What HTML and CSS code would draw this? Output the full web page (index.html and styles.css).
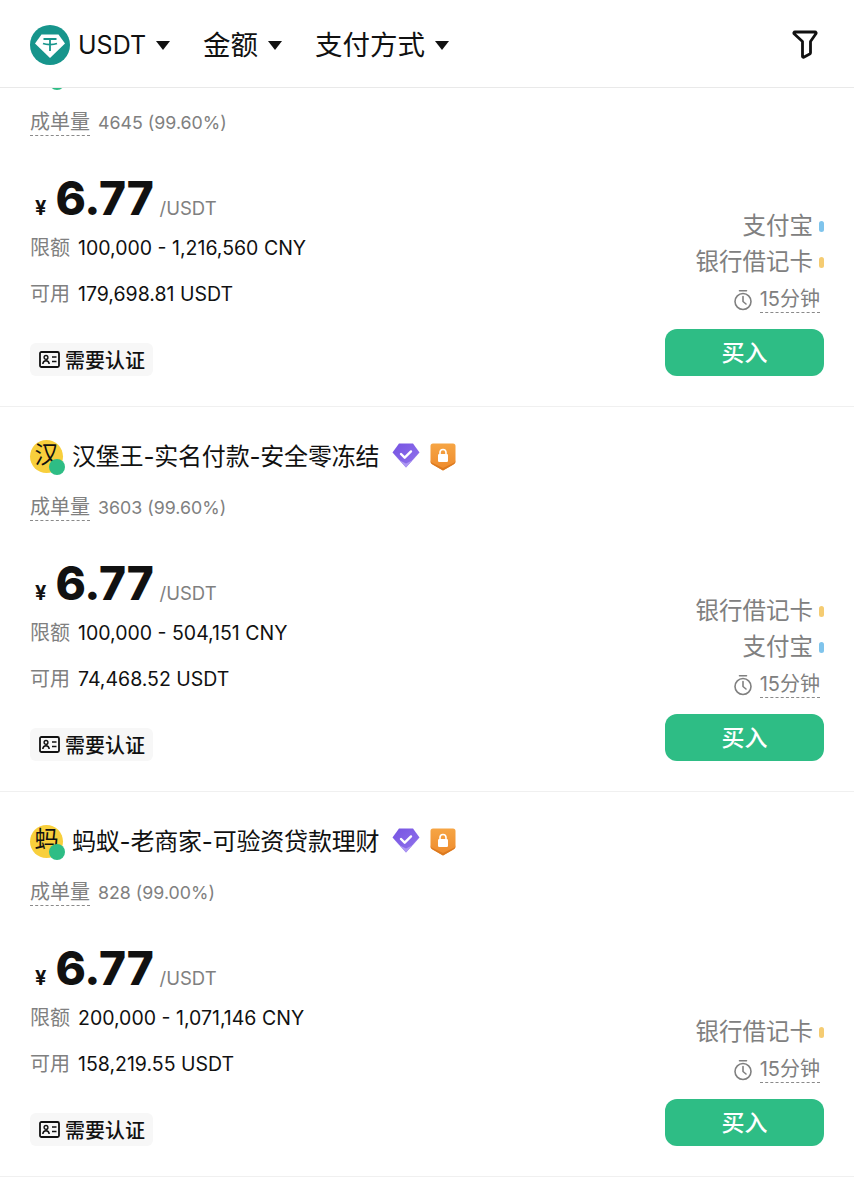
FILE: index.html
```html
<!DOCTYPE html>
<html lang="zh-CN">
  <head>
    <meta charset="UTF-8" />
    <title>USDT</title>
    <link rel="stylesheet" href="styles.css">
  </head>
  <body>
    <svg class="defs" width="0" height="0">
      <defs>
        <linearGradient id="gem-top" x1="0" y1="0" x2="1" y2="1">
          <stop offset="0" stop-color="#7653e2" />
          <stop offset="1" stop-color="#9275ec" />
        </linearGradient>
        <linearGradient id="shield-fill" x1="0" y1="0" x2="0" y2="1">
          <stop offset="0" stop-color="#f6a544" />
          <stop offset="1" stop-color="#ee8a2c" />
        </linearGradient>
        <symbol id="clock" viewBox="0 0 20 22">
          <circle cx="10" cy="12.5" r="8" fill="none" stroke="#808080" stroke-width="1.6" />
          <path d="M6.5 1.8h7M10 7.500v5l3 2.500" fill="none" stroke="#808080" stroke-width="1.6" stroke-linecap="round" stroke-linejoin="round" />
        </symbol>
        <symbol id="idcard" viewBox="0 0 21 17">
          <rect x="1" y="1" width="19" height="15" rx="1.5" fill="none" stroke="#111" stroke-width="1.8" />
          <circle cx="7" cy="6.4" r="1.9" fill="none" stroke="#111" stroke-width="1.4" />
          <path d="M3.8 13c.2-2.200 1.500-3.200 3.200-3.200s3 1 3.200 3.200M13 6h4.500M13 10.500h4.500" fill="none" stroke="#111" stroke-width="1.5" />
        </symbol>
        <symbol id="gem" viewBox="0 0 28 25">
          <path d="M7 .5h14L27.500 9.500 14 24.500.5 9.500z" fill="url(#gem-top)" />
          <path d="M.5 9.500L14 24.500 27.500 9.500l-6.500 7.500L14 20.500 7 17z" fill="#ad97f2" />
          <path d="M9 11l3.700 3.700 6.300-6.300" fill="none" stroke="#fff" stroke-width="2.400" stroke-linecap="round" stroke-linejoin="round" />
        </symbol>
        <symbol id="shield" viewBox="0 0 26 28">
          <path d="M3 .5h20a2.500 2.500 0 0 1 2.500 2.500v15c0 1.800-.8 2.800-2.500 3.700L13 27.500 3 21.700C1.300 20.800.5 19.800.5 18V3A2.500 2.500 0 0 1 3 .5z" fill="url(#shield-fill)" />
          <path d="M.5 17v1c0 1.800.8 2.800 2.500 3.700l10 5.800 10-5.800c1.700-.9 2.500-1.900 2.500-3.700v-1c0 1.800-.8 2.400-2.500 3.300L13 25 3 20.300C1.300 19.400.5 18.800.5 17z" fill="#dc7a20" />
          <rect x="8" y="11" width="10" height="8" rx="1.200" fill="#fff" />
          <path d="M10 11.500V9.500a3 3 0 0 1 6 0v2" fill="none" stroke="#fff" stroke-width="1.600" />
        </symbol>
      </defs>
    </svg>

    <header class="topbar">
      <div class="filters">
        <div class="filter">
          <svg class="coin" viewBox="0 0 40 40">
            <circle cx="20" cy="20" r="20" fill="#17958c" />
            <path d="M11.500 9.500h17L35 18.500 20 33 5 18.500z" fill="#fff" />
            <path d="M13.500 14h13M20 14v12M13 18.500c3.500 1.400 10.500 1.400 14 0" fill="none" stroke="#17958c" stroke-width="1.800" />
          </svg>
          <span class="coin-name">USDT</span><i class="caret"></i>
        </div>
        <div class="filter"><span class="filter-name">金额</span><i class="caret"></i></div>
        <div class="filter"><span class="filter-name">支付方式</span><i class="caret"></i></div>
      </div>
      <svg class="funnel" viewBox="0 0 26 29">
        <path d="M3 2h20c1 0 1.500 1 .9 1.800L18.500 11.500v11.200c0 .6-.3 1-.8 1.300l-6 3.200c-.6.3-1.200-.1-1.200-.8V11.500L2.100 3.800C1.500 3 2 2 3 2z" fill="none" stroke="#111" stroke-width="2.800" stroke-linejoin="round" />
      </svg>
    </header>

    <main class="list">
      <section class="card">
        <div class="merchant">
          <div class="avatar"><i class="online"></i></div>
        </div>
        <p class="orders"><span class="dotted">成单量</span>4645 (99.60%)</p>
        <div class="body">
          <div class="info">
            <div class="price"><em>¥</em><strong>6.77</strong><small>/USDT</small></div>
            <p class="line"><label>限额</label>100,000 - 1,216,560 CNY</p>
            <p class="line"><label>可用</label>179,698.81 USDT</p>
            <div class="tag"><svg><use href="#idcard" /></svg>需要认证</div>
          </div>
          <div class="side">
            <p class="pay">支付宝<i class="blue"></i></p>
            <p class="pay">银行借记卡<i class="yellow"></i></p>
            <p class="time"><svg><use href="#clock" /></svg><span class="dotted">15分钟</span></p>
            <button class="buy">买入</button>
          </div>
        </div>
      </section>

      <section class="card">
        <div class="merchant">
          <div class="avatar">汉<i class="online"></i></div>
          <h2>汉堡王-实名付款-安全零冻结</h2>
          <svg class="gem"><use href="#gem" /></svg>
          <svg class="shield"><use href="#shield" /></svg>
        </div>
        <p class="orders"><span class="dotted">成单量</span>3603 (99.60%)</p>
        <div class="body">
          <div class="info">
            <div class="price"><em>¥</em><strong>6.77</strong><small>/USDT</small></div>
            <p class="line"><label>限额</label>100,000 - 504,151 CNY</p>
            <p class="line"><label>可用</label>74,468.52 USDT</p>
            <div class="tag"><svg><use href="#idcard" /></svg>需要认证</div>
          </div>
          <div class="side">
            <p class="pay">银行借记卡<i class="yellow"></i></p>
            <p class="pay">支付宝<i class="blue"></i></p>
            <p class="time"><svg><use href="#clock" /></svg><span class="dotted">15分钟</span></p>
            <button class="buy">买入</button>
          </div>
        </div>
      </section>

      <section class="card">
        <div class="merchant">
          <div class="avatar">蚂<i class="online"></i></div>
          <h2>蚂蚁-老商家-可验资贷款理财</h2>
          <svg class="gem"><use href="#gem" /></svg>
          <svg class="shield"><use href="#shield" /></svg>
        </div>
        <p class="orders"><span class="dotted">成单量</span>828 (99.00%)</p>
        <div class="body">
          <div class="info">
            <div class="price"><em>¥</em><strong>6.77</strong><small>/USDT</small></div>
            <p class="line"><label>限额</label>200,000 - 1,071,146 CNY</p>
            <p class="line"><label>可用</label>158,219.55 USDT</p>
            <div class="tag"><svg><use href="#idcard" /></svg>需要认证</div>
          </div>
          <div class="side">
            <p class="pay">银行借记卡<i class="yellow"></i></p>
            <p class="time"><svg><use href="#clock" /></svg><span class="dotted">15分钟</span></p>
            <button class="buy">买入</button>
          </div>
        </div>
      </section>
    </main>
  </body>
</html>
```

FILE: styles.css
```css
* {
  box-sizing: border-box;
}

html,
body {
  height: 1200px;
  overflow: hidden;
}

body {
  margin: 0;
  background-color: #fff;
  color: #111;
  font-family: Inter, "Noto Sans CJK SC", "Noto Sans", sans-serif;
}

p,
h2 {
  margin: 0;
  font-weight: 400;
}

.defs {
  position: absolute;
}

.topbar {
  position: relative;
  z-index: 2;
  display: flex;
  align-items: center;
  justify-content: space-between;
  height: 88px;
  padding: 2px 36px 0 30px;
  background-color: #fff;
  border-bottom: 1px solid #e9e9e9;
}

.filters {
  display: flex;
  align-items: center;
  gap: 33px;
}

.filter {
  display: flex;
  align-items: center;
  font-size: 27.5px;
}

.filter-name {
  margin-bottom: 4px;
}

.coin {
  width: 40px;
  height: 40px;
  margin-right: 8px;
}

.coin-name {
  font-size: 25px;
}

.caret {
  width: 0;
  height: 0;
  margin-left: 10px;
  margin-top: 1px;
  border-left: 7px solid transparent;
  border-right: 7px solid transparent;
  border-top: 9px solid #111;
}

.funnel {
  width: 26px;
  height: 29px;
}

.list {
  margin-top: -66px;
}

.card {
  height: 385px;
  padding: 33px 30px 0;
  border-bottom: 1px solid #f0f0f0;
}

.merchant {
  display: flex;
  align-items: center;
  height: 33px;
}

.avatar {
  position: relative;
  flex: none;
  width: 33px;
  height: 33px;
  border-radius: 50%;
  background-color: #f8cf3c;
  font-size: 24px;
  line-height: 29px;
  text-align: center;
}

.online {
  position: absolute;
  left: 19px;
  top: 19px;
  width: 16px;
  height: 16px;
  border-radius: 50%;
  background-color: #2ebd85;
}

.merchant h2 {
  margin-left: 9px;
  margin-bottom: 4px;
  font-size: 24px;
  letter-spacing: -0.2px;
  white-space: nowrap;
}

.gem {
  width: 28px;
  height: 25px;
  margin-left: 13px;
  margin-bottom: 2px;
}

.shield {
  width: 26px;
  height: 28px;
  margin-left: 10px;
}

.orders {
  height: 28px;
  margin-top: 21px;
  color: #808080;
  font-size: 17.8px;
  line-height: 28px;
}

.dotted {
  display: inline-block;
  border-bottom: 1px dashed #8a8a8a;
  font-size: 20px;
  line-height: 26px;
}

.orders .dotted {
  margin-right: 8px;
}

.body {
  display: flex;
  justify-content: space-between;
}

.price {
  display: flex;
  align-items: baseline;
  height: 57px;
  margin-top: 31px;
  line-height: 60px;
}

.price em {
  margin: 0 9px 0 5px;
  font-size: 20px;
  font-style: normal;
  font-weight: 700;
}

.price strong {
  font-size: 46px;
  font-weight: 800;
  letter-spacing: -0.2px;
}

.price small {
  margin-left: 6px;
  color: #808080;
  font-size: 18.5px;
}

.line {
  display: flex;
  height: 46px;
  font-size: 19.5px;
  line-height: 46px;
  white-space: nowrap;
}

.line label {
  width: 48px;
  color: #808080;
  font-size: 20px;
}

.tag {
  display: inline-flex;
  align-items: center;
  height: 33px;
  margin-top: 26px;
  padding: 0 8px 0 9px;
  border-radius: 6px;
  background-color: #f7f7f7;
  font-size: 20px;
  font-weight: 500;
}

.tag svg {
  width: 21px;
  height: 17px;
  margin-right: 5px;
}

.side {
  display: flex;
  flex-direction: column;
  align-items: flex-end;
  justify-content: flex-end;
  height: 240px;
  color: #808080;
}

.pay {
  display: flex;
  align-items: center;
  height: 36px;
  font-size: 23.5px;
}

.pay i {
  width: 5px;
  height: 11px;
  margin-top: 4px;
  margin-left: 6px;
  border-radius: 3px;
}

.blue {
  background-color: #7fc4ec;
}

.yellow {
  background-color: #f5cc72;
}

.time {
  display: flex;
  align-items: center;
  height: 39px;
  margin-top: 2px;
  padding-right: 4px;
}

.time .dotted {
  font-size: 20px;
  line-height: 25px;
}

.time svg {
  width: 20px;
  height: 22px;
  margin-right: 7px;
}

.buy {
  width: 159px;
  height: 47px;
  margin-top: 10px;
  margin-bottom: 1px;
  padding: 0 0 4px;
  border: none;
  border-radius: 12px;
  background-color: #2ebd85;
  color: #fff;
  font-family: inherit;
  font-size: 23px;
  font-weight: 500;
}
```
